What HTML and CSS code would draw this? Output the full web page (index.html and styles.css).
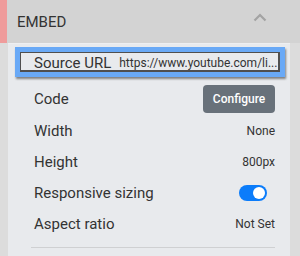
FILE: index.html
```html
<!DOCTYPE html>
<html>

<head>
    <title>Embed Settings</title>
    <link rel="stylesheet" href="styles.css">
</head>

<body>
    <div class="panel">
        <div class="header">
            <span class="title">EMBED</span>
            <svg class="chevron" width="14" height="9" viewBox="0 0 14 9">
                <path d="M1.5 7.5 L7 2 L12.5 7.5" fill="none" stroke="#a3a3a3" stroke-width="2.2" />
            </svg>
        </div>

        <div class="content">
            <div class="source-outline">
                <div class="source-box">
                    <span class="label">Source URL</span>
                    <span class="url">https://www.youtube.com/li...</span>
                </div>
            </div>

            <div class="row row-code">
                <span class="label">Code</span>
                <button type="button" class="configure">Configure</button>
            </div>
            <div class="row">
                <span class="label">Width</span>
                <span class="value">None</span>
            </div>
            <div class="row">
                <span class="label">Height</span>
                <span class="value">800px</span>
            </div>
            <div class="row">
                <span class="label">Responsive sizing</span>
                <span class="toggle"><span class="knob"></span></span>
            </div>
            <div class="row">
                <span class="label">Aspect ratio</span>
                <span class="value">Not Set</span>
            </div>

            <div class="divider"></div>
        </div>
    </div>
</body>

</html>
```

FILE: styles.css
```css
body {
    margin: 0;
    font-family: Roboto, "Liberation Sans", sans-serif;
    color: #333333;
}

.panel {
    width: 300px;
    height: 256px;
    overflow: hidden;
    background-color: #dcdcdc;
}

.header {
    display: flex;
    align-items: center;
    justify-content: space-between;
    height: 43px;
    box-sizing: border-box;
    padding: 0 33px 0 10px;
    background-color: #d3d3d3;
    border-left: 7px solid #ef9b9b;
}

.title {
    font-size: 15px;
    margin-top: 1px;
}

.chevron {
    margin-top: -8px;
}

.content {
    margin: 0 10px 0 8px;
    padding: 3px 15px 0 7px;
    height: 213px;
    background-color: #e8eaed;
    border-top: 1px solid #eeeff1;
}

.source-outline {
    margin-right: -10px;
    border: 5px solid #69a9f6;
    box-shadow: 1px 2px 2px rgba(0, 0, 0, 0.45);
}

.source-box {
    display: flex;
    align-items: center;
    box-sizing: border-box;
    height: 20px;
    padding: 2px 5px 0 13px;
    border: 1px solid #4f4f4f;
    border-right-width: 2px;
    border-bottom-width: 2px;
    background-color: #e8eaed;
    white-space: nowrap;
    overflow: hidden;
}

.label {
    font-size: 15px;
    white-space: nowrap;
}

.url {
    margin-left: 8px;
    font-size: 12px;
    white-space: nowrap;
}

.row {
    display: flex;
    align-items: center;
    justify-content: space-between;
    height: 31px;
    padding-left: 19px;
}

.row-code {
    height: 32px;
    margin-top: 6px;
}

.value {
    font-size: 12px;
}

.configure {
    width: 72px;
    height: 28px;
    padding: 0;
    border: none;
    border-radius: 4px;
    background-color: #68717a;
    color: #ffffff;
    font-family: Roboto, "Liberation Sans", sans-serif;
    font-size: 12px;
    font-weight: 500;
}

.toggle {
    display: flex;
    align-items: center;
    justify-content: flex-end;
    width: 28px;
    height: 16px;
    box-sizing: border-box;
    padding-right: 2px;
    border-radius: 8px;
    background-color: #0b7cfa;
    margin-right: 8px;
}

.knob {
    width: 12px;
    height: 12px;
    border-radius: 50%;
    background-color: #ffffff;
}

.divider {
    margin: 8px 0 0 16px;
    border-top: 1px solid #cfd0d2;
}
```
